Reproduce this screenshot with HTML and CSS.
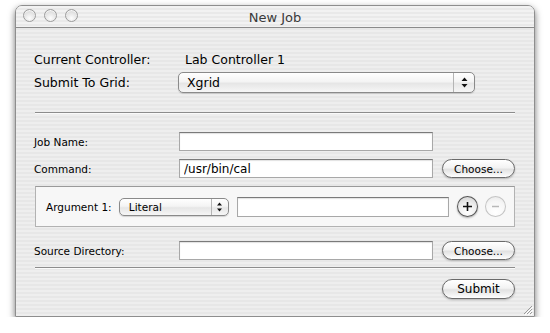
FILE: index.html
```html
<!DOCTYPE html>
<html lang="en">
<head>
  <meta charset="UTF-8" />
  <meta name="viewport" content="width=device-width, initial-scale=1.0"/>
  <title>New Job</title>
  <link rel="stylesheet" href="styles.css">
</head>
<body>
  <div class="window">
    <div class="titlebar">
      <div class="lights">
        <span class="light"></span>
        <span class="light"></span>
        <span class="light"></span>
      </div>
      <div class="title">New Job</div>
    </div>

    <form class="content" id="newJob">
      <div class="top-row">
        <span class="big-label">Current Controller:</span>
        <span class="big-value">Lab Controller 1</span>
      </div>
      <div class="top-row">
        <label class="big-label" for="grid">Submit To Grid:</label>
        <div class="popup popup-large" id="grid">
          <span class="popup-text">Xgrid</span>
          <span class="popup-arrows">
            <svg width="7" height="11" viewBox="0 0 7 11"><path d="M3.5 0.5 L6.5 4 L0.5 4 Z M3.5 10.5 L6.5 7 L0.5 7 Z" fill="#111"/></svg>
          </span>
        </div>
      </div>

      <hr class="sep sep-first">

      <div class="form-row">
        <label class="small-label" for="jobName">Job Name:</label>
        <input class="field" type="text" id="jobName" name="job-name" />
      </div>
      <div class="form-row">
        <label class="small-label" for="command">Command:</label>
        <input class="field" type="text" id="command" name="command" value="/usr/bin/cal" />
        <button type="button" class="aqua-btn">Choose...</button>
      </div>

      <div class="arg-box">
        <label class="small-label arg-label" for="arg1">Argument 1:</label>
        <div class="popup popup-small">
          <span class="popup-text">Literal</span>
          <span class="popup-arrows">
            <svg width="7" height="10" viewBox="0 0 7 10"><path d="M3.5 0.5 L6 3.5 L1 3.5 Z M3.5 9.5 L6 6.5 L1 6.5 Z" fill="#111"/></svg>
          </span>
        </div>
        <input class="field arg-field" type="text" id="arg1" name="arg1" />
        <button type="button" class="round-btn">
          <svg width="11" height="11" viewBox="0 0 11 11"><path d="M5.5 1 V10 M1 5.5 H10" stroke="#111" stroke-width="1.6"/></svg>
        </button>
        <button type="button" class="round-btn disabled">
          <svg width="11" height="11" viewBox="0 0 11 11"><path d="M2 5.5 H9" stroke="#b8b8b8" stroke-width="1.5"/></svg>
        </button>
      </div>

      <div class="form-row source-row">
        <label class="small-label" for="sourceDir">Source Directory:</label>
        <input class="field" type="text" id="sourceDir" name="source-dir" />
        <button type="button" class="aqua-btn">Choose...</button>
      </div>

      <hr class="sep sep-second">

      <div class="submit-row">
        <button type="submit" class="aqua-btn submit-btn">Submit</button>
      </div>
    </form>

    <svg class="grip" width="11" height="11" viewBox="0 0 11 11">
      <path d="M10 2 L2 10 M10 5 L5 10 M10 8 L8 10" stroke="#9a9a9a" stroke-width="1"/>
      <path d="M11 3 L3 11 M11 6 L6 11 M11 9 L9 11" stroke="#fff" stroke-width="1"/>
    </svg>
  </div>
</body>
</html>
```

FILE: styles.css
```css
* {
  box-sizing: border-box;
  font-family: "DejaVu Sans", "Liberation Sans", sans-serif;
}

body {
  margin: 0;
  background: #fff;
}

.window {
  position: relative;
  margin: 5px 0 0 15px;
  width: 520px;
  height: 312px;
  border: 1px solid #8e8e8e;
  border-radius: 7px 7px 0 0;
  background: repeating-linear-gradient(to bottom, #eeeeee 0 2px, #e7e7e7 2px 4px);
  box-shadow: 0 3px 7px rgba(0,0,0,0.55);
}

.titlebar {
  position: relative;
  height: 22px;
  display: flex;
  align-items: center;
  justify-content: center;
  border-bottom: 1px solid #8a8a8a;
  border-radius: 6px 6px 0 0;
  background: repeating-linear-gradient(to bottom, #f2f2f2 0 2px, #e9e9e9 2px 4px);
}

.lights {
  position: absolute;
  left: 7px;
  top: 3px;
  display: flex;
  gap: 8px;
}

.light {
  width: 13px;
  height: 13px;
  border-radius: 50%;
  border: 1px solid #9c9c9c;
  background: radial-gradient(circle at 50% 75%, #fdfdfd 0, #e4e4e4 55%, #c9c9c9 100%);
  box-shadow: inset 0 1px 1px rgba(255,255,255,0.9);
}

.title {
  font-size: 13px;
  color: #3a3a3a;
  margin-top: 1px;
}

.content {
  padding: 21px 19px 0 18px;
}

.top-row {
  display: grid;
  grid-template-columns: 144px 297px;
  align-items: center;
  height: 21px;
  margin-bottom: 2px;
  font-size: 12.5px;
  color: #000;
}

.big-value {
  padding-left: 7px;
}

.popup {
  display: flex;
  align-items: stretch;
  border: 1px solid #8a8a8a;
  border-radius: 5px;
  background: linear-gradient(to bottom, #ffffff 0%, #f4f4f4 45%, #e6e6e6 55%, #f6f6f6 100%);
  box-shadow: 0 1px 1px rgba(0,0,0,0.15);
  color: #000;
}

.popup-text {
  flex: 1;
  display: flex;
  align-items: center;
}

.popup-arrows {
  display: flex;
  align-items: center;
  justify-content: center;
  border-left: 1px solid #b4b4b4;
}

.popup-large {
  height: 21px;
  font-size: 12.5px;
}

.popup-large .popup-text {
  padding-left: 8px;
}

.popup-large .popup-arrows {
  width: 21px;
}

.popup-small {
  width: 110px;
  height: 18px;
  font-size: 10.5px;
}

.popup-small .popup-text {
  padding-left: 9px;
}

.popup-small .popup-arrows {
  width: 17px;
}

.sep {
  margin: 0 0 0 1px;
  height: 2px;
  border: none;
  border-top: 1px solid #8c8c8c;
  border-bottom: 1px solid #fafafa;
}

/* top-row margin collapses into this one */
.sep-first {
  margin-top: 19px;
  margin-bottom: 18px;
}

.sep-second {
  margin-top: 7px;
  margin-bottom: 10px;
}

.form-row {
  display: grid;
  grid-template-columns: 136px 254px 73px;
  column-gap: 9px;
  align-items: center;
  height: 19px;
  margin-bottom: 8px;
}

.small-label {
  font-size: 10.5px;
  color: #000;
}

.field {
  height: 19px;
  padding: 0 4px;
  border: 1px solid #a8a8a8;
  border-top-color: #7a7a7a;
  background: #fff;
  box-shadow: inset 0 1px 1px rgba(0,0,0,0.12);
  font-size: 12px;
  color: #000;
  outline: none;
}

.aqua-btn {
  height: 19px;
  padding: 0;
  border: 1px solid #6a6a6a;
  border-radius: 10px;
  background: linear-gradient(to bottom, #ffffff 0%, #f3f3f3 45%, #e2e2e2 55%, #f4f4f4 85%, #ffffff 100%);
  box-shadow: 0 1px 2px rgba(0,0,0,0.25);
  font-size: 10.5px;
  color: #000;
}

.arg-box {
  display: flex;
  align-items: center;
  height: 41px;
  margin: 0 0 14px 1px;
  padding: 0 8px 0 10px;
  border: 1px solid #b2b2b2;
  border-top-color: #9a9a9a;
  background: #f7f7f7;
}

.arg-label {
  width: 73px;
}

.arg-field {
  width: 213px;
  height: 20px;
  margin-left: 8px;
}

.round-btn {
  width: 21px;
  height: 21px;
  padding: 0;
  display: flex;
  align-items: center;
  justify-content: center;
  border-radius: 50%;
  border: 1px solid #555;
  background: radial-gradient(circle at 50% 80%, #ffffff 0, #eeeeee 50%, #cfcfcf 100%);
  box-shadow: 0 1px 2px rgba(0,0,0,0.3);
  margin-left: 8px;
}

.round-btn.disabled {
  border-color: #c4c4c4;
  background: radial-gradient(circle at 50% 80%, #ffffff 0, #f6f6f6 60%, #e6e6e6 100%);
  box-shadow: none;
  margin-left: 7px;
}

.source-row {
  margin-bottom: 0;
}

.submit-row {
  display: flex;
  justify-content: flex-end;
}

.submit-btn {
  width: 73px;
  height: 20px;
  font-size: 12px;
}

.grip {
  position: absolute;
  right: 1px;
  bottom: 1px;
}
```
